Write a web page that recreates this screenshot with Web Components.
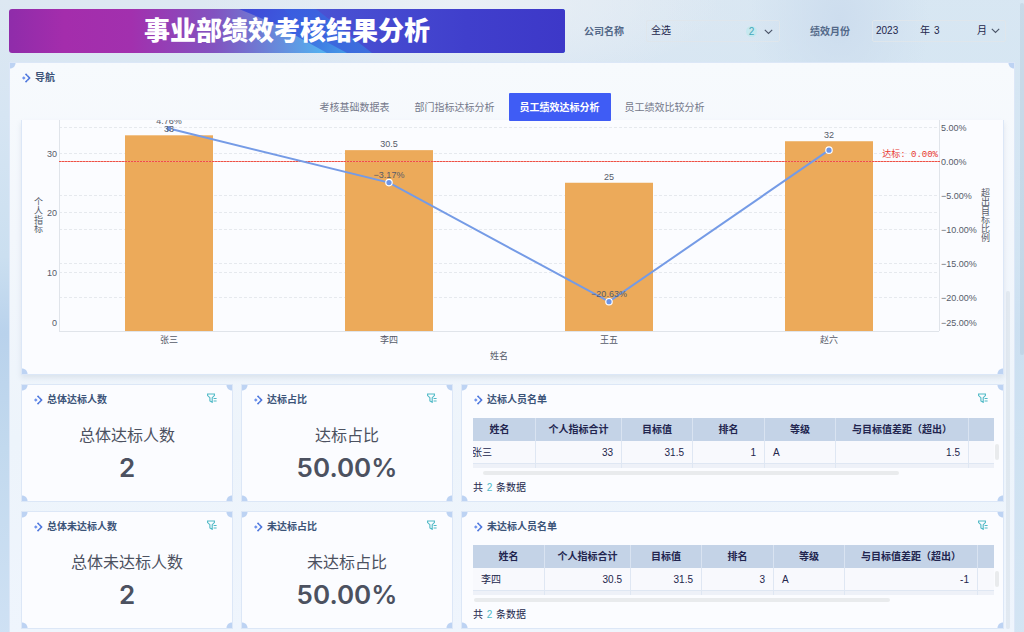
<!DOCTYPE html>
<html lang="zh-CN">
<head>
<meta charset="utf-8">
<meta name="viewport" content="width=device-width, initial-scale=1">
<title>事业部绩效考核结果分析</title>
<style>
  html, body { margin: 0; height: 100%; }
  body {
    overflow: hidden;
    font: 10px/14px "Liberation Sans", "Noto Sans CJK SC", sans-serif;
    color: #23264c;
    --line: #dce7f7;
    --corner: #bdd3f3;
    --heading: #3c5479;
    --teal: #4fb9c6;
    --ink: #4c5160;
  }
</style>
</head>
<body>
<dash-app></dash-app>
<script>
function define(name, css, html, ready) {
  const template = document.createElement('template');
  template.innerHTML = `<style>*{box-sizing:border-box}button,input,select{font:inherit;color:inherit;background:none;border:0;margin:0;padding:0}${css}</style>${html}`;
  customElements.define(name, class extends HTMLElement {
    connectedCallback() {
      if (this.shadowRoot) return;
      this.attachShadow({ mode: 'open' }).append(template.content.cloneNode(true));
      if (ready) ready(this, this.shadowRoot);
    }
  });
}

/* Page banner */
define('dash-banner', `
  :host { display: block; position: relative; overflow: hidden; border-radius: 3px; }
  svg { position: absolute; inset: 0; width: 100%; height: 100%; }
  h1 { position: relative; margin: 0; padding-bottom: 4px; text-align: center; color: #fff;
       font: 900 26px/40px "Noto Sans CJK SC", sans-serif; }
`, `
  <svg viewBox="0 0 556 44" preserveAspectRatio="none" aria-hidden="true">
    <defs>
      <linearGradient id="base" x1="0" x2="556" y1="0" y2="0" gradientUnits="userSpaceOnUse">
        <stop offset="0" stop-color="#8f2caa"/><stop offset=".1" stop-color="#a42dac"/>
        <stop offset=".22" stop-color="#a230ae"/><stop offset=".37" stop-color="#8253c0"/>
        <stop offset=".47" stop-color="#6a84d8"/><stop offset=".56" stop-color="#55aeee"/>
        <stop offset="1" stop-color="#55aeee"/>
      </linearGradient>
      <linearGradient id="band" x1="235" x2="335" y1="0" y2="44" gradientUnits="userSpaceOnUse">
        <stop offset="0" stop-color="#3f48d6"/><stop offset=".5" stop-color="#3b5fe0"/><stop offset="1" stop-color="#4498e6"/>
      </linearGradient>
      <linearGradient id="mid" x1="275" x2="365" y1="0" y2="44" gradientUnits="userSpaceOnUse">
        <stop offset="0" stop-color="#3a5ce0"/><stop offset="1" stop-color="#3d70dc"/>
      </linearGradient>
      <linearGradient id="deep" x1="310" x2="556" y1="0" y2="0" gradientUnits="userSpaceOnUse">
        <stop offset="0" stop-color="#4a52d3"/><stop offset=".6" stop-color="#403fcc"/><stop offset="1" stop-color="#3d38c8"/>
      </linearGradient>
    </defs>
    <path fill="url(#base)" d="M0 0H556V44H0z"/>
    <path fill="url(#band)" d="M230 0H556V44H318L266 15z"/>
    <path fill="url(#mid)" d="M275 0H556V44H338L290 18z"/>
    <path fill="url(#deep)" d="M307 0H556V44H363z"/>
  </svg>
  <h1><slot></slot></h1>
`);

/* Label with a boxed control */
define('filter-field', `
  :host { display: flex; align-items: center; gap: 22px; }
  .name { flex: none; font-weight: 700; color: #526888; padding-top: 2px; }
  .box { flex: 1; min-width: 0; height: 22px; border: 1px solid #dfe6ec; border-radius: 2px; }
  ::slotted(*) { height: 100%; }
`, `<span class="name"></span><div class="box"><slot></slot></div>`,
(host, root) => { root.querySelector('.name').textContent = host.getAttribute('label'); });

define('company-select', `
  :host { display: block; position: relative; }
  select { appearance: none; width: 100%; height: 100%; padding: 0 4px; outline: 0; }
  .count { position: absolute; right: 22px; top: 5px; width: 11px; height: 11px; border-radius: 50%;
           background: #c5e8ef; color: #45a9b9; text-align: center; line-height: 11px; }
  svg { position: absolute; right: 6px; top: 8px; pointer-events: none; }
`, `
  <select aria-label="公司名称"><option>全选</option></select>
  <span class="count">2</span>
  <svg width="9" height="6" fill="none" stroke="#4a5468" stroke-width="1.1"><path d="M.8.8 4.5 4.5 8.2.8"/></svg>
`);

define('month-picker', `
  :host { display: flex; align-items: center; padding: 0 5px 0 3px; }
  input { width: 44px; outline: 0; height: 14px; }
  .month { flex: 1; width: 0; min-width: 0; margin-left: 4px; }
  button { width: 10px; height: 14px; display: grid; place-items: center; margin-left: 3px; }
`, `
  <input value="2023" aria-label="年份"><span>年</span>
  <input class="month" value="3" aria-label="月份"><span>月</span>
  <button aria-label="选择月份"><svg width="9" height="6" fill="none" stroke="#4a5468" stroke-width="1.1"><path d="M.8.8 4.5 4.5 8.2.8"/></svg></button>
`);

/* Framed panel with a heading and quarter-round corner marks */
define('panel-card', `
  :host {
    display: block; min-width: 0; border: 1px solid var(--line);
    background:
      radial-gradient(circle at 0 0, var(--corner-top, var(--corner)) 5px, transparent 6px),
      radial-gradient(circle at 100% 0, var(--corner-top, var(--corner)) 5px, transparent 6px),
      radial-gradient(circle at 0 100%, var(--corner) 5px, transparent 6px),
      radial-gradient(circle at 100% 100%, var(--corner) 5px, transparent 6px),
      var(--fill);
  }
  header { display: flex; align-items: flex-start; padding: 8px 15px 6px 12px; }
  :host(:not([heading])) header { display: none; }
  .mark { flex: none; width: 9px; height: 14px; margin-right: 4px; }
  h2 { flex: 1; margin: 0; font: inherit; font-weight: 700; color: var(--heading); }
  button { display: grid; place-items: center; width: 10px; height: 10px; }
  :host(:not([filterable])) button { display: none; }
`, `
  <header>
    <svg class="mark" viewBox="0 0 9 14" aria-hidden="true">
      <path d="M0 7l1.8-1.8L3.6 7 1.8 8.8z" fill="#6d92ee"/>
      <path d="M3.5 2.9 5.4 4.8M3.5 11.1 5.4 9.2M5.5 4.9 7.6 7 5.5 9.1" fill="none" stroke="#4a74dc" stroke-width="1.5"/>
    </svg>
    <h2></h2>
    <button aria-label="筛选"><svg width="10" height="10" viewBox="0 0 10 10" fill="none" stroke="#4fb9c6" stroke-width="1.1">
      <path d="M.6 1h6.8v1.6L5.2 4.7v4.6L2.9 7.9V4.7L.6 2.6z"/><path d="M6.6 5.5h3M6.6 8h3"/></svg></button>
  </header>
  <slot></slot>
`, (host, root) => { root.querySelector('h2').textContent = host.getAttribute('heading') || ''; });

define('tab-bar', `
  :host { display: flex; justify-content: center; gap: 3px; }
  button { height: 28px; padding: 1px 11px 0; color: #74788a; cursor: pointer; white-space: nowrap; }
  button[aria-selected=true] { background: #3f5cf5; color: #fff; font-weight: 700; border-radius: 1px; }
`, ``, (host, root) => {
  host.setAttribute('role', 'tablist');
  host.getAttribute('tabs').split(',').forEach((text, i) => {
    const b = document.createElement('button');
    b.role = 'tab';
    b.textContent = text;
    b.setAttribute('aria-selected', i === +host.getAttribute('active'));
    root.append(b);
  });
});

/* Bars on the left axis, line on the right axis */
define('combo-chart', `
  :host { display: block; }
  svg { display: block; width: 100%; height: auto; font-size: 9px; fill: #565b69; }
  path, polyline { fill: none; }
  .upright { writing-mode: vertical-rl; }
  .mono { font-family: "Liberation Mono", "Noto Sans CJK SC", monospace; fill: #e8382e; }
`, `<svg viewBox="0 0 981 254" role="img" aria-label="个人指标与超出目标比例"></svg>`, (host, root) => {
  const rows = [
    { name: '张三', value: 33, rate: 4.76 },
    { name: '李四', value: 30.5, rate: -3.17 },
    { name: '王五', value: 25, rate: -20.63 },
    { name: '赵六', value: 32, rate: 1.59, hideRate: true }
  ];
  const left = 37, right = 917, base = 211, step = (right - left) / rows.length, bar = 88;
  const yValue = v => base - v * 5.93;
  const yRate = r => 41 - r * 6.82;
  const pct = r => (r < 0 ? '−' : '') + Math.abs(r).toFixed(2) + '%';
  const x = i => left + step * (i + .5);
  const text = (tx, ty, s, anchor = 'middle', extra = '') => `<text x="${tx}" y="${ty + 4}" text-anchor="${anchor}" ${extra}>${s}</text>`;
  let out = '';
  const grid = y => `<path d="M${left} ${Math.round(y) + .5}H${right}" stroke="#e6e9ee" stroke-dasharray="3 2"/>`;
  [10, 20, 30].forEach(v => out += grid(yValue(v)));
  [5, -5, -10, -15, -20].forEach(r => out += grid(yRate(r)));
  out += `<path d="M${left + .5} 0V${base}M${left} ${base + .5}H${right}M${right + .5} 0V${base}" stroke="#e0e4ea"/>`;
  rows.forEach((d, i) => {
    out += `<rect x="${x(i) - bar / 2}" y="${yValue(d.value)}" width="${bar}" height="${base - yValue(d.value)}" fill="#ecaa5a"/>`;
    out += text(x(i), base + 8, d.name);
  });
  out += `<rect x="${left}" y="41" width="${right - left}" height="1" fill="#f4948b"/>`;
  for (let dash = left; dash < right; dash += 3) out += `<rect x="${dash}" y="41" width="2" height="1" fill="#ee5146"/>`;
  out += `<polyline points="${rows.map((d, i) => x(i) + ',' + yRate(d.rate)).join(' ')}" stroke="#759be6" stroke-width="2"/>`;
  rows.forEach((d, i) => out += `<circle cx="${x(i)}" cy="${yRate(d.rate)}" r="3.2" fill="#6d95e6" stroke="#fff" stroke-width="1.2"/>`);
  rows.forEach((d, i) => {
    out += text(x(i), yValue(d.value) - 7, d.value);
    if (!d.hideRate) out += text(x(i), yRate(d.rate) - 9, pct(d.rate));
  });
  [0, 10, 20, 30].forEach(v => out += text(left - 2, v ? yValue(v) : base - 9, v, 'end'));
  [5, 0, -5, -10, -15, -20, -25].forEach(r => out += text(right + 2, r === -25 ? base - 9 : yRate(r), pct(r), 'start'));
  out += text(right - 1, 33, '达标: 0.00%', 'end', 'class="mono"');
  out += text((left + right) / 2, base + 24, '姓名');
  out += `<text class="upright" x="16" y="95" text-anchor="middle">个人指标</text>`;
  out += `<text class="upright" x="963" y="95" text-anchor="middle">超出目标比例</text>`;
  root.querySelector('svg').innerHTML = out;
});

define('stat-value', `
  :host { display: block; text-align: center; color: var(--ink); padding: 11px 0 17px; }
  .label { font-size: 16px; line-height: 24px; }
  .value { margin-top: 4px; font: 600 26px/32px Inter, sans-serif; }
`, `<div class="label"><slot></slot></div><div class="value"></div>`,
(host, root) => { root.querySelector('.value').textContent = host.getAttribute('value'); });

define('data-grid', `
  :host { display: block; padding: 5px 4px 6px 11px; }
  .frame { display: flex; gap: 1px; }
  .view { flex: 1; min-width: 0; height: 50px; overflow: hidden; }
  table { width: 650px; table-layout: fixed; border-collapse: separate; border-spacing: 0; }
  th { height: 23px; padding: 1px 0 0; background: #c4d3e7; font-weight: 700; color: #22254f; border-right: 1px solid #d9e3f1; }
  td { height: 23px; padding: 1px 8px 0; background: #f8f9fd; border-right: 1px solid #dfe7f3; border-bottom: 1px solid #dfe7f3; }
  tr:nth-child(2) td { background: #eef1f8; }
  .num { text-align: right; }
  .bar-y { width: 4px; height: 16px; margin-top: 26px; border-radius: 2px; background: #e9ebed; }
  .bar-x { width: 79%; height: 4px; margin-top: 3px; border-radius: 2px; background: #e9ebed; }
  p { margin: 6px 0 0; }
  b { font-weight: 400; color: var(--teal); margin: 0 1px; }
`, `
  <div class="frame"><div class="view"><table>
    <colgroup><col style="width:72px"><col style="width:86px"><col style="width:71px"><col style="width:72px"><col style="width:71px"><col style="width:133px"><col></colgroup>
    <thead><tr><th>姓名</th><th>个人指标合计</th><th>目标值</th><th>排名</th><th>等级</th><th>与目标值差距（超出）</th><th></th></tr></thead>
    <tbody></tbody>
  </table></div><div class="bar-y"></div></div>
  <div class="bar-x"></div>
  <p>共 <b>2</b> 条数据</p>
`, (host, root) => {
  const cells = host.getAttribute('row').split(',');
  const numeric = [1, 2, 3, 5];
  const line = values => '<tr>' + values.map((v, i) => `<td${numeric.includes(i) ? ' class="num"' : ''}>${v}</td>`).join('') + '</tr>';
  root.querySelector('tbody').innerHTML = line([...cells, '']) + line(Array(7).fill(''));
  const shift = +host.getAttribute('scrolled') || 0;
  root.querySelector('.view').scrollLeft = shift;
  root.querySelector('.bar-x').style.marginLeft = shift + 1 + 'px';
});

define('dash-app', `
  :host {
    display: flex; flex-direction: column; position: relative; height: 100%; min-height: 100vh; padding: 9px 9px 0;
    background:
      radial-gradient(ellipse 260px 90px at 45% 0, #eaf0f6, transparent),
      radial-gradient(ellipse 90px 120px at 82% 3%, #cdddee, transparent),
      linear-gradient(90deg, transparent 60%, #d5e6f3aa 80%),
      linear-gradient(#dde8f2, #d6e5f3 18%, #cbdff0 40%, #b9d2ec 52%, #c2d9ee 70%, #cfe1f4 100%);
  }
  .top { display: grid; grid-template-columns: 556fr 450fr; }
  .filters { min-width: 0; display: flex; align-items: center; gap: 30px; padding: 0 9px 0 19px; }
  filter-field { flex: 1 1 0; min-width: 0; }
  .shell { flex: 1; margin-top: 9px; border-bottom: 0; --fill: linear-gradient(#f7fafd, #f3f7fc 30%, #edf4fb 65%, #eff5fd); }
  main panel-card { --fill: #fbfcff; }
  tab-bar { margin: 2px 0 -1px; position: relative; z-index: 1; }
  main { position: relative; display: grid; gap: 9px; padding: 0 10px 0 11px; }
  main .chart { border-top: 0; box-shadow: 0 3px 5px #b8c3d255; --corner-top: transparent; }
  .row { display: grid; grid-template-columns: 212fr 212fr 543fr; gap: 8px; }
  .thumb { position: absolute; width: 4px; border-radius: 2px; background: #a9b8c633; }
  .inner { right: 4px; top: 171px; bottom: 0; }
  .outer { right: 0; top: 3px; height: 352px; background: #a3b8cb44; }
`, `
  <div class="top">
    <dash-banner>事业部绩效考核结果分析</dash-banner>
    <div class="filters">
      <filter-field label="公司名称"><company-select></company-select></filter-field>
      <filter-field label="绩效月份"><month-picker></month-picker></filter-field>
    </div>
  </div>
  <panel-card class="shell" heading="导航">
    <tab-bar tabs="考核基础数据表,部门指标达标分析,员工绩效达标分析,员工绩效比较分析" active="2"></tab-bar>
    <main>
      <panel-card class="chart"><combo-chart></combo-chart></panel-card>
      <div class="row">
        <panel-card heading="总体达标人数" filterable><stat-value value="2">总体达标人数</stat-value></panel-card>
        <panel-card heading="达标占比" filterable><stat-value value="50.00%">达标占比</stat-value></panel-card>
        <panel-card heading="达标人员名单" filterable><data-grid row="张三,33,31.5,1,A,1.5" scrolled="9"></data-grid></panel-card>
      </div>
      <div class="row">
        <panel-card heading="总体未达标人数" filterable><stat-value value="2">总体未达标人数</stat-value></panel-card>
        <panel-card heading="未达标占比" filterable><stat-value value="50.00%">未达标占比</stat-value></panel-card>
        <panel-card heading="未达标人员名单" filterable><data-grid row="李四,30.5,31.5,3,A,-1"></data-grid></panel-card>
      </div>
      <div class="thumb inner"></div>
    </main>
  </panel-card>
  <div class="thumb outer"></div>
`);
</script>
</body>
</html>
